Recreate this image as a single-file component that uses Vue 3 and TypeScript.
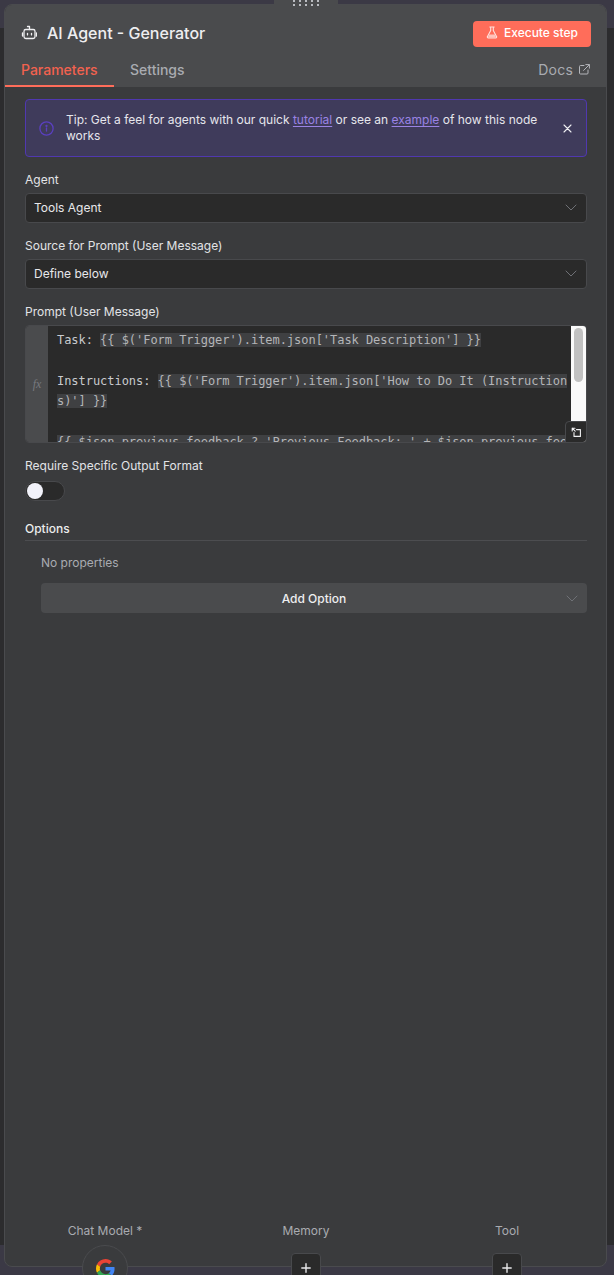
<script setup lang="ts">
interface Field { label: string; value: string }
const selects: Field[] = [
  { label: 'Agent', value: 'Tools Agent' },
  { label: 'Source for Prompt (User Message)', value: 'Define below' },
]
const handles = ['Memory', 'Tool']
const o = '{' + '{ '
const c = ' }' + '}'
const expr1 = o + "$('Form Trigger').item.json['Task Description']" + c
const expr2a = o + "$('Form Trigger').item.json['How to Do It (Instruction"
const expr2b = "s)']" + c
const expr3 = o + "$json.previous_feedback ? 'Previous Feedback: ' + $json.previous_feed"
</script>

<template>
  <div class="page">
    <div class="drag"><span v-for="n in 10" :key="n" class="dot"></span></div>
    <div class="panel">
      <header class="head">
        <div class="title-row">
          <div class="title">
            <svg class="robot" width="16" height="16" viewBox="0 0 16 16" fill="none" stroke="#f0f0f2" stroke-width="1.3" stroke-linecap="round" stroke-linejoin="round">
              <rect x="3" y="4.5" width="11" height="9" rx="1.8" />
              <path d="M8.5 4.5V1.5H6.5M1.5 8v3M15.5 8v3M6.5 8.3v1.6M10.5 8.3v1.6" />
            </svg>
            <span>AI Agent - Generator</span>
          </div>
          <button class="exec">
            <svg width="12" height="13" viewBox="0 0 12 13" fill="none" stroke="#fff" stroke-width="1.1" stroke-linejoin="round" stroke-linecap="round" opacity=".8">
              <path d="M3.8 1h4.4M4.7 1v3.6L1.5 10.4a1 1 0 0 0 .9 1.6h7.2a1 1 0 0 0 .9-1.6L7.3 4.6V1" />
              <path d="M3.2 8.4h5.6l1.3 3.1H1.9z" fill="#fff" stroke="none" opacity=".75" />
            </svg>
            <span>Execute step</span>
          </button>
        </div>
        <nav class="tabs">
          <a class="tab active">Parameters</a>
          <a class="tab">Settings</a>
          <a class="docs">
            <span>Docs</span>
            <svg width="11" height="11" viewBox="0 0 11 11" fill="none" stroke="#b4b6bb" stroke-width="1" stroke-linecap="round" stroke-linejoin="round">
              <path d="M5 1.5H1.5a1 1 0 0 0-1 1v6.5a1 1 0 0 0 1 1H8a1 1 0 0 0 1-1V6" />
              <path d="M6.8.6h3.6v3.6M10.2.8 4.6 6.4" />
            </svg>
          </a>
        </nav>
      </header>

      <main class="body">
        <div class="tip">
          <svg class="tip-icon" width="15" height="15" viewBox="0 0 15 15" fill="none" stroke="#5a3fc0" stroke-width="1.3" stroke-linecap="round">
            <circle cx="7.5" cy="7.5" r="6.6" />
            <path d="M7.5 7v3" />
            <circle cx="7.5" cy="4.9" r=".5" fill="#5a3fc0" />
          </svg>
          <p>Tip: Get a feel for agents with our quick <a>tutorial</a> or see an <a>example</a> of how this node works</p>
          <svg class="close" width="9" height="9" viewBox="0 0 9 9" stroke="#eeeef2" stroke-width="1.1" stroke-linecap="round">
            <path d="M1 1l7 7M8 1 1 8" />
          </svg>
        </div>

        <div v-for="f in selects" :key="f.label" class="field">
          <label>{{ f.label }}</label>
          <div class="select">
            <span>{{ f.value }}</span>
            <svg class="chev" width="12" height="7" viewBox="0 0 12 7" fill="none" stroke="#6f7176" stroke-width="1" stroke-linecap="round" stroke-linejoin="round"><path d="M1 1l5 5 5-5" /></svg>
          </div>
        </div>

        <div class="field">
          <label>Prompt (User Message)</label>
          <div class="editor">
            <div class="fx">fx</div>
            <div class="code">
              <div class="line"><span>Task: </span><mark>{{ expr1 }}</mark></div>
              <div class="line">&nbsp;</div>
              <div class="line"><span>Instructions: </span><mark>{{ expr2a }}</mark></div>
              <div class="line"><mark>{{ expr2b }}</mark></div>
              <div class="line">&nbsp;</div>
              <div class="line"><mark>{{ expr3 }}</mark></div>
            </div>
            <div class="scroll"><div class="thumb"></div></div>
            <div class="expand">
              <svg width="11" height="11" viewBox="0 0 11 11" fill="none" stroke="#f0f0f2" stroke-width="1.1" stroke-linecap="round" stroke-linejoin="round">
                <path d="M1.2 4V1.2H4M1.2 1.2l3 3" />
                <path d="M5.5 2.6h3.9v6.8H3V5.5" />
              </svg>
            </div>
          </div>
        </div>

        <div class="field">
          <label class="toggle-label">Require Specific Output Format</label>
          <div class="toggle"><div class="knob"></div></div>
        </div>

        <section class="options">
          <h3>Options</h3>
          <div class="opt-inner">
            <div class="none">No properties</div>
            <div class="add">
              <span>Add Option</span>
              <svg class="chev" width="12" height="7" viewBox="0 0 12 7" fill="none" stroke="#6f7176" stroke-width="1" stroke-linecap="round" stroke-linejoin="round"><path d="M1 1l5 5 5-5" /></svg>
            </div>
          </div>
        </section>
      </main>
    </div>

    <div class="connections">
      <div class="conn first">
        <span class="conn-label">Chat Model *</span>
        <div class="gcircle">
          <svg width="19" height="19" viewBox="0 0 48 48">
            <path fill="#EA4335" d="M24 9.5c3.5 0 6.7 1.2 9.2 3.6l6.9-6.9C35.9 2.4 30.5 0 24 0 14.6 0 6.5 5.4 2.6 13.2l8 6.2C12.5 13.7 17.8 9.5 24 9.5z" />
            <path fill="#4285F4" d="M46.9 24.5c0-1.6-.1-3.1-.4-4.5H24v9h12.9c-.6 3-2.2 5.5-4.7 7.2l7.7 6c4.5-4.2 7-10.3 7-17.7z" />
            <path fill="#FBBC05" d="M10.5 28.6c-.5-1.4-.8-3-.8-4.6s.3-3.2.8-4.6l-8-6.2C.9 16.5 0 20.1 0 24s.9 7.5 2.6 10.8l7.9-6.2z" />
            <path fill="#34A853" d="M24 48c6.5 0 11.9-2.1 15.9-5.8l-7.7-6c-2.2 1.4-4.9 2.3-8.2 2.3-6.2 0-11.5-4.2-13.4-9.9l-8 6.2C6.5 42.6 14.6 48 24 48z" />
          </svg>
        </div>
      </div>
      <div v-for="h in handles" :key="h" class="conn">
        <span class="conn-label">{{ h }}</span>
        <div class="plus">
          <svg width="10" height="10" viewBox="0 0 10 10" stroke="#e8e8ea" stroke-width="1.4" stroke-linecap="round"><path d="M5 .8v8.4M.8 5h8.4" /></svg>
        </div>
      </div>
    </div>
  </div>
</template>

<style>
html, body { margin: 0; background: #2b2b2d; }
</style>

<style scoped>
* { box-sizing: border-box; }
.page {
  position: relative;
  width: 614px;
  height: 1275px;
  overflow: hidden;
  padding: 4px 7px 8px 4px;
  font-family: Inter, "Liberation Sans", sans-serif;
  font-size: 12px;
  color: #e6e6e9;
  background: linear-gradient(#3b3945 0, #3b3945 28px, #2c2c2e 28px, #2c2c2e 1245px, #3b3945 1245px);
}
.drag {
  position: absolute;
  left: 274px;
  top: 0;
  width: 64px;
  height: 8px;
  background: #4a4b4d;
  display: grid;
  grid-template-columns: repeat(5, 2px);
  grid-auto-rows: 2px;
  gap: 2px 4px;
  justify-content: center;
  align-content: start;
  z-index: 1;
}
.dot { width: 2px; height: 2px; background: #b9bbc0; }
.panel {
  height: 100%;
  border-radius: 8px;
  border: 1px solid #4a4b4e;
  background: #3a3b3d;
  overflow: hidden;
  display: flex;
  flex-direction: column;
}
.head {
  background: #4a4b4d;
  height: 82px;
  flex: none;
}
.title-row {
  display: flex;
  justify-content: space-between;
  align-items: center;
  height: 50px;
  padding: 6px 15px 0 16px;
}
.title {
  display: flex;
  align-items: center;
  gap: 10px;
  font-size: 16px;
  font-weight: 450;
  color: #eeeef0;
}
.exec {
  display: flex;
  align-items: center;
  gap: 6px;
  height: 26px;
  width: 118px;
  padding: 0 0 2px 13px;
  border: 0;
  border-radius: 4px;
  background: #ff6d5a;
  color: #fff;
  font: 450 12px Inter, "Liberation Sans", sans-serif;
  margin-top: 1px;
}
.tabs {
  display: flex;
  align-items: flex-start;
  height: 32px;
  font-size: 14px;
  font-weight: 500;
  color: #a9abb1;
}
.tab { padding: 1px 16px 0; height: 32px; line-height: 28px; }
.tab.active {
  color: #f2624f;
  box-shadow: inset 0 -2px 0 #ff6d5a;
  width: 109px;
}
.docs {
  margin-left: auto;
  display: flex;
  align-items: center;
  gap: 6px;
  height: 28px;
  padding-right: 16px;
  font-weight: 400;
  font-size: 14px;
  letter-spacing: .2px;
}
.body { padding: 12px 19px 0 20px; flex: 1; }
.tip {
  display: flex;
  align-items: center;
  height: 58px;
  border: 1px solid #5038b0;
  border-radius: 4px;
  background: #3f3b5b;
  padding: 0 14px 0 13px;
  line-height: 16px;
  font-size: 12px;
}
.tip p { margin: 0; flex: 1; padding: 0 18px 0 12px; color: #e6e6ec; }
.tip a { color: #9a83e4; text-decoration: underline; text-underline-offset: 2px; }
.tip-icon, .close { flex: none; }
.field { margin-top: 14px; }
label { display: block; height: 17px; line-height: 18px; font-size: 12px; color: #e2e3e6; margin-bottom: 5px; }
.toggle-label { margin-bottom: 7px; }
.select {
  height: 30px;
  display: flex;
  align-items: center;
  justify-content: space-between;
  background: #2a2a2a;
  border: 1px solid #48494c;
  border-radius: 4px;
  padding: 0 9px 2px 8px;
  color: #e8e8ea;
}
.editor {
  position: relative;
  height: 118px;
  display: flex;
  background: #2a2a2a;
  border-radius: 4px;
  border: 1px solid #48494c;
  overflow: hidden;
}
.fx {
  flex: none;
  width: 22px;
  background: #4a4b4d;
  display: flex;
  align-items: center;
  justify-content: center;
  font: italic 12px "Liberation Serif", serif;
  color: #77797e;
}
.code {
  flex: 1;
  min-width: 0;
  overflow: hidden;
  padding: 4px 0 0 9px;
  font: 12px/20.4px "DejaVu Sans Mono", monospace;
  letter-spacing: -0.04px;
  color: #c9cace;
  white-space: pre;
}
.line { height: 20.4px; }
mark { background: #3f4042; color: #b4b5b8; }
.scroll { flex: none; width: 15px; background: #fafafa; position: relative; margin-left: 4px; }
.thumb { position: absolute; left: 3px; top: 2px; width: 9px; height: 54px; border-radius: 5px; background: #c1c1c1; }
.expand {
  position: absolute;
  right: -1px;
  bottom: -1px;
  width: 22px;
  height: 22px;
  background: #2a2a2a;
  border: 1px solid #48494c;
  border-radius: 4px 0 0 0;
  display: flex;
  align-items: center;
  justify-content: center;
}
.toggle { width: 40px; height: 20px; border-radius: 10px; background: #2a2a2a; border: 1px solid #48494c; padding: 1px; }
.knob { width: 16px; height: 16px; border-radius: 50%; background: #f2f2fa; }
.options { margin-top: 19px; }
h3 {
  margin: 0;
  height: 21px;
  font-size: 12px;
  font-weight: 450;
  line-height: 18px;
  color: #eceded;
  border-bottom: 1px solid #4c4d50;
}
.opt-inner { padding: 14px 0 0 16px; }
.none { height: 28px; line-height: 16px; color: #a9abb1; }
.add {
  position: relative;
  height: 30px;
  border-radius: 4px;
  background: #4a4b4d;
  display: flex;
  align-items: center;
  justify-content: center;
  color: #eeeef0;
  font-weight: 450;
}
.add .chev { position: absolute; right: 9px; top: 12px; }
.connections {
  position: absolute;
  left: 0;
  top: 1222px;
  width: 614px;
  height: 53px;
}
.conn { position: absolute; top: 0; width: 120px; display: flex; flex-direction: column; align-items: center; }
.conn:nth-child(1) { left: 45px; }
.conn:nth-child(2) { left: 246px; }
.conn:nth-child(3) { left: 447px; }
.conn-label { height: 17px; line-height: 17px; color: #a9abb1; font-size: 12px; }
.gcircle {
  margin-top: 6px;
  width: 46px;
  height: 46px;
  flex: none;
  border-radius: 50%;
  background: #3a3b3d;
  border: 1px solid #4a4b4e;
  display: flex;
  align-items: center;
  justify-content: center;
}
.plus {
  margin-top: 14px;
  width: 30px;
  height: 30px;
  flex: none;
  border-radius: 4px;
  background: #2a2a2a;
  border: 1px solid #48494c;
  display: flex;
  align-items: center;
  justify-content: center;
}
</style>
